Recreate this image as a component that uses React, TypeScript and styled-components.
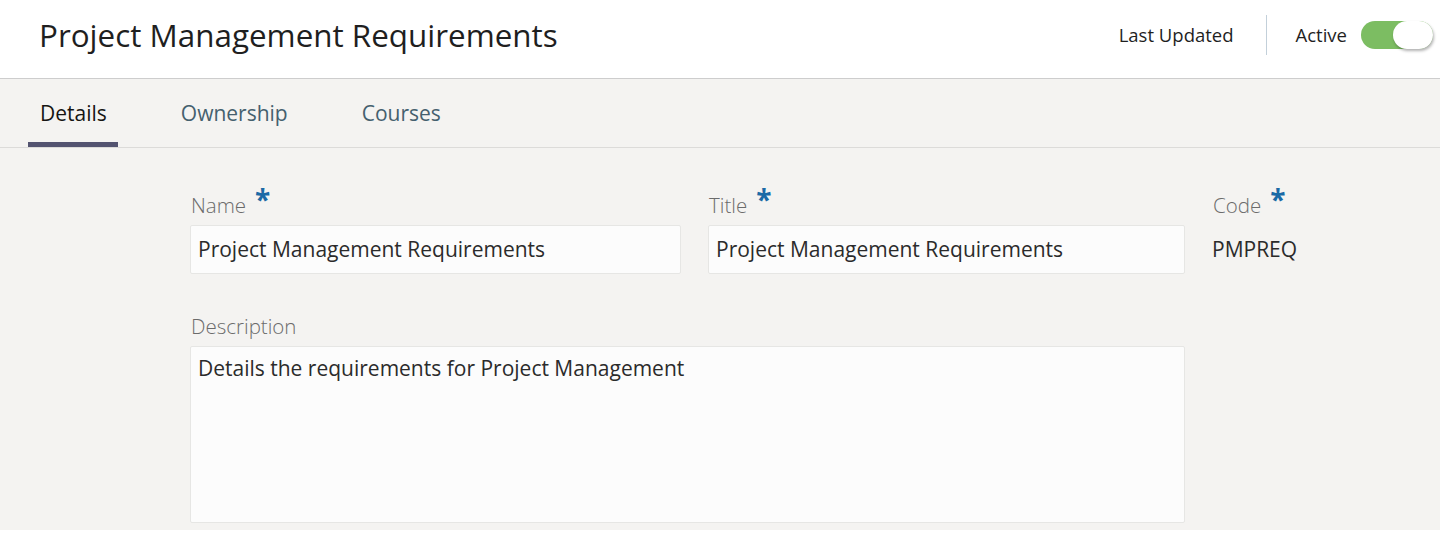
import React, { useState } from 'react';
import styled, { createGlobalStyle } from 'styled-components';

const GlobalStyle = createGlobalStyle`
    html, body {
        margin: 0;
        padding: 0;
        background: #ffffff;
    }
    body {
        font-family: "Open Sans", "Noto Sans", Arial, sans-serif;
        color: #2b2b2b;
    }
    * {
        box-sizing: border-box;
    }
`;

// Page shell
const Page = styled.div`
    width: 1440px;
    height: 530px;
    background-color: #f4f3f1;
    overflow: hidden;
`;

// Header
const Header = styled.header`
    display: flex;
    justify-content: space-between;
    align-items: center;
    height: 79px;
    padding: 0 7px 0 39px;
    background-color: #ffffff;
    border-bottom: 1px solid #cdcdcd;
`;

const Title = styled.h1`
    margin: 0 0 9px 0;
    font-size: 31.4px;
    font-weight: 400;
    color: #1f1f1f;
`;

const HeaderRight = styled.div`
    display: flex;
    align-items: center;
    height: 100%;
    padding-bottom: 9px;
`;

const HeaderText = styled.span`
    font-size: 18.5px;
    color: #1f1f1f;
`;

const Divider = styled.div`
    width: 1px;
    height: 40px;
    margin: 0 29px 0 32px;
    background-color: #c3d0da;
`;

const ToggleTrack = styled.button<{ on: boolean }>`
    position: relative;
    width: 72px;
    height: 28px;
    margin-left: 14px;
    padding: 0;
    border: none;
    border-radius: 14px;
    background-color: ${({ on }) => (on ? '#7cbd62' : '#c8c8c8')};
    cursor: pointer;
`;

const ToggleKnob = styled.span<{ on: boolean }>`
    position: absolute;
    top: 0;
    left: ${({ on }) => (on ? '32px' : '0')};
    width: 40px;
    height: 28px;
    border-radius: 14px;
    background-color: #ffffff;
    box-shadow: 1px 2px 3px rgba(0, 0, 0, 0.3);
`;

// Tabs
const TabBar = styled.nav`
    display: flex;
    height: 69px;
    padding-left: 28px;
    border-bottom: 1px solid #dcdbd9;
`;

const Tab = styled.div<{ active?: boolean }>`
    display: flex;
    align-items: center;
    padding: 5px 11px 0 12px;
    margin-right: 51px;
    font-size: 21px;
    color: ${({ active }) => (active ? '#161513' : '#45606e')};
    border-bottom: 5px solid ${({ active }) => (active ? '#535370' : 'transparent')};
    cursor: pointer;
`;

// Form
const Form = styled.div`
    display: grid;
    grid-template-columns: 491px 477px 1fr;
    column-gap: 27px;
    padding: 43px 0 0 190px;
`;

const Field = styled.div<{ span?: number }>`
    display: flex;
    flex-direction: column;
    grid-column: span ${({ span }) => span || 1};
    margin-bottom: 38px;
`;

const Label = styled.label`
    display: flex;
    align-items: flex-start;
    height: 28px;
    margin-bottom: 6px;
    padding-left: 1px;
    font-size: 20.5px;
    font-weight: 300;
    color: #6b6b6b;
`;

const Required = styled.span`
    margin-left: 9px;
    margin-top: -6px;
    font-size: 28px;
    font-weight: 700;
    line-height: 1;
    color: #1b6aa6;
`;

const Input = styled.div`
    display: flex;
    align-items: center;
    height: 49px;
    padding: 0 7px 1px;
    font-size: 21px;
    color: #2b2b2b;
    background-color: #fcfcfc;
    border: 1px solid #e6e6e4;
    border-radius: 2px;
`;

const TextArea = styled(Input)`
    align-items: flex-start;
    height: 177px;
    padding-top: 7px;
`;

const ReadOnly = styled.div`
    display: flex;
    align-items: center;
    height: 49px;
    padding-bottom: 1px;
    font-size: 21px;
    color: #2b2b2b;
`;

const tabs = ['Details', 'Ownership', 'Courses'];

const App: React.FC = () => {
    const [active, setActive] = useState(true);
    const [tab, setTab] = useState('Details');

    return (
        <>
            <GlobalStyle />
            <Page>
                <Header>
                    <Title>Project Management Requirements</Title>
                    <HeaderRight>
                        <HeaderText>Last Updated</HeaderText>
                        <Divider />
                        <HeaderText>Active</HeaderText>
                        <ToggleTrack on={active} onClick={() => setActive(!active)}>
                            <ToggleKnob on={active} />
                        </ToggleTrack>
                    </HeaderRight>
                </Header>
                <TabBar>
                    {tabs.map((t) => (
                        <Tab key={t} active={t === tab} onClick={() => setTab(t)}>
                            {t}
                        </Tab>
                    ))}
                </TabBar>
                <Form>
                    <Field>
                        <Label>Name<Required>*</Required></Label>
                        <Input>Project Management Requirements</Input>
                    </Field>
                    <Field>
                        <Label>Title<Required>*</Required></Label>
                        <Input>Project Management Requirements</Input>
                    </Field>
                    <Field>
                        <Label>Code<Required>*</Required></Label>
                        <ReadOnly>PMPREQ</ReadOnly>
                    </Field>
                    <Field span={2}>
                        <Label>Description</Label>
                        <TextArea>Details the requirements for Project Management</TextArea>
                    </Field>
                </Form>
            </Page>
        </>
    );
};

export default App;
